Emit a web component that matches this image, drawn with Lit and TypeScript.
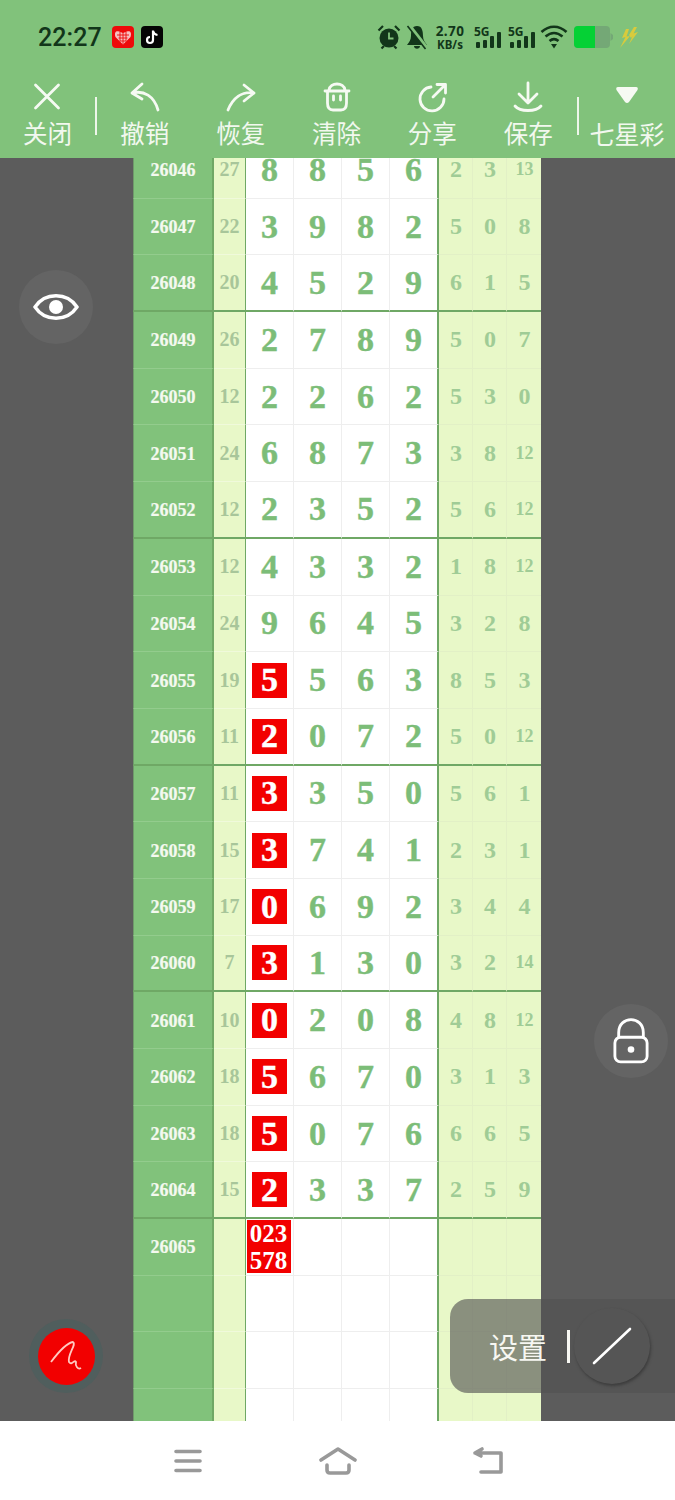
import { LitElement, html, css, svg } from "lit";
import { customElement } from "lit/decorators.js";

type Row = { id: string; sum: string; first: string; rest: string[]; right: string[]; hit?: boolean };

const raw: [string, string, string, string, boolean?][] = [
  ["26046", "27", "8856", "2 3 13"],
  ["26047", "22", "3982", "5 0 8"],
  ["26048", "20", "4529", "6 1 5"],
  ["26049", "26", "2789", "5 0 7"],
  ["26050", "12", "2262", "5 3 0"],
  ["26051", "24", "6873", "3 8 12"],
  ["26052", "12", "2352", "5 6 12"],
  ["26053", "12", "4332", "1 8 12"],
  ["26054", "24", "9645", "3 2 8"],
  ["26055", "19", "5563", "8 5 3", true],
  ["26056", "11", "2072", "5 0 12", true],
  ["26057", "11", "3350", "5 6 1", true],
  ["26058", "15", "3741", "2 3 1", true],
  ["26059", "17", "0692", "3 4 4", true],
  ["26060", "7", "3130", "3 2 14", true],
  ["26061", "10", "0208", "4 8 12", true],
  ["26062", "18", "5670", "3 1 3", true],
  ["26063", "18", "5076", "6 6 5", true],
  ["26064", "15", "2337", "2 5 9", true],
];

const rows: Row[] = raw.map(([id, sum, d, r, hit]) => ({
  id,
  sum,
  first: d[0],
  rest: d.slice(1).split(""),
  right: r.split(" "),
  hit,
}));

const tools: [string, ReturnType<typeof svg>][] = [
  ["关闭", svg`<path d="M5.5 4 L28.5 27 M28.5 4 L5.5 27" />`],
  ["撤销", svg`<path d="M14 3 L4 12 L14 18 M4 12 C16 9 26 15 30 29" />`],
  ["恢复", svg`<path d="M20 4 L30 12 L20 20 M30 12 C18 10 9 17 4 29" />`],
  [
    "清除",
    svg`<path d="M9 9 C10 1 24 1 25 9 M5 10 H29 M7.5 10 V22 C7.5 27 10 29 13 29 H21 C24 29 26.5 27 26.5 22 V10 M13.5 15 V19 M20.5 15 V19" />`,
  ],
  ["分享", svg`<path d="M16 6 A12 12 0 1 0 29 18 M18 16 L30 4 M22 3.5 H30.5 V12" />`],
  ["保存", svg`<path d="M17 2 V21 M8 13 L17 22 L26 13 M4 25 C9 31 25 31 30 25" />`],
];

@customElement("app-root")
export class AppRoot extends LitElement {
  static styles = css`
    :host {
      display: block;
      width: 675px;
      height: 1500px;
      position: relative;
      overflow: hidden;
      background: #fff;
      font-family: "Noto Sans CJK SC", "Noto Sans", sans-serif;
    }
    .head {
      height: 158px;
      background: #81c27b;
      position: relative;
      z-index: 2;
    }
    .status {
      height: 74px;
      display: flex;
      align-items: center;
      padding: 0 37px 0 38px;
      box-sizing: border-box;
      color: #12361a;
    }
    .time {
      font: 500 25px/1 Roboto, sans-serif;
      width: 74px;
      letter-spacing: 0.1px;
    }
    .app {
      width: 22px;
      height: 22px;
      display: block;
      margin-right: 7px;
    }
    .spacer {
      flex: 1;
    }
    .sicons {
      display: flex;
      align-items: center;
      height: 26px;
    }
    .ic {
      display: block;
    }
    .speed {
      width: 28px;
      margin: 0 10px 0 8px;
      text-align: center;
      font-family: "Noto Sans", Roboto, sans-serif;
      font-weight: 700;
      line-height: 1;
      display: flex;
      flex-direction: column;
      align-items: center;
    }
    .speed b {
      font-size: 13.5px;
      line-height: 14px;
      letter-spacing: 0.4px;
      font-weight: 700;
      white-space: nowrap;
    }
    .speed span {
      font-size: 11.5px;
      line-height: 13px;
      white-space: nowrap;
    }
    .sig {
      position: relative;
      width: 27px;
      height: 26px;
      margin-right: 7px;
    }
    .sig.two {
      margin-right: 5px;
    }
    .sig span {
      position: absolute;
      left: 0;
      top: 2px;
      font: 700 12px/1 "Noto Sans", Roboto, sans-serif;
    }
    .sig svg {
      position: absolute;
      left: 0;
      top: 0;
    }
    .tools {
      display: flex;
      height: 84px;
      color: #f2f8ef;
    }
    .tool {
      width: 96px;
      display: flex;
      flex-direction: column;
      align-items: center;
    }
    .tool.first {
      width: 95px;
    }
    .tool svg {
      display: block;
      margin-top: 7px;
      height: 32px;
      width: 34px;
      fill: none;
      stroke: #f6faf3;
      stroke-width: 2.8;
      stroke-linecap: round;
      stroke-linejoin: round;
    }
    .tool svg.solid {
      fill: #f6faf3;
      stroke: none;
    }
    .tool span {
      font-size: 24.5px;
      line-height: 30px;
      margin-top: 5px;
      white-space: nowrap;
    }
    .tool.wide span {
      font-size: 25px;
    }
    .sep {
      width: 2px;
      height: 38px;
      margin-top: 23px;
      background: #eef6ea;
      flex: none;
    }
    .sep.b {
      margin-left: 1px;
    }
    .board {
      height: 1263px;
      background: #5c5c5c;
      overflow: hidden;
      padding-left: 133px;
      box-sizing: border-box;
    }
    .table {
      width: 408px;
      margin-top: -16px;
    }
    .row {
      display: grid;
      grid-template-columns: 81px 32px 48px 48px 48px 49px 34px 34px 34px;
      height: 56.69px;
    }
    .cell {
      box-sizing: border-box;
      display: flex;
      align-items: center;
      justify-content: center;
      font-family: "Liberation Serif", serif;
      font-weight: 700;
      border-bottom: 1px solid #eeeeee;
      min-width: 0;
      overflow: visible;
    }
    .id {
      background: #81c27b;
      color: #f4f9ef;
      font-size: 18px;
      -webkit-text-stroke: 0.2px #f4f9ef;
      border-left: 1px solid #6f9a6a;
      border-right: 2px solid #6fa865;
      border-bottom-color: #93cc8d;
      padding-top: 2px;
    }
    .sum {
      background: #e8f8c8;
      color: #a8c69a;
      font-size: 20px;
      font-weight: 700;
      border-right: 1.5px solid #6fa865;
      border-bottom-color: #f0fadb;
    }
    .num {
      background: #fff;
      color: #7cbd78;
      font-size: 34px;
      -webkit-text-stroke: 0.4px #7cbd78;
      border-right: 1px solid #eeeeee;
    }
    .num.last {
      border-right: 2px solid #6fa865;
    }
    .r {
      background: #e8f8c8;
      color: #a0cc96;
      font-size: 24px;
      padding-left: 1px;
      border-right: 1px solid #e2f0c6;
      border-bottom-color: #e2f0c6;
    }
    .r.small {
      font-size: 18px;
    }
    .r.end {
      border-right: 0;
    }
    .row.end .cell {
      border-bottom: 2px solid #6fa865;
    }
    .hit {
      width: 35px;
      height: 35px;
      background: #f20000;
      color: #fff;
      -webkit-text-stroke: 0.4px #fff;
      display: flex;
      align-items: center;
      justify-content: center;
    }
    .multi {
      width: 44px;
      height: 53px;
      background: #f20000;
      color: #fff;
      -webkit-text-stroke: 0;
      font-size: 25px;
      line-height: 27px;
      text-align: center;
      margin-left: -2px;
      margin-top: -1px;
    }
    .nav {
      height: 79px;
      background: #fff;
      position: relative;
      z-index: 2;
      display: grid;
      grid-template-columns: repeat(3, 150px);
      justify-content: center;
      align-items: center;
      justify-items: center;
    }
    .nav svg {
      display: block;
      fill: none;
      stroke: #999999;
      stroke-width: 3.6;
      stroke-linecap: round;
      stroke-linejoin: round;
    }
    .float {
      position: absolute;
      z-index: 3;
      border-radius: 50%;
      display: flex;
      align-items: center;
      justify-content: center;
      width: 74px;
      height: 74px;
      background: #646464;
    }
    .eye {
      left: 19px;
      top: 270px;
    }
    .lock {
      left: 594px;
      top: 1004px;
    }
    .pen {
      left: 29px;
      top: 1319px;
      background: #505e5d;
    }
    .pen i {
      display: flex;
      width: 57px;
      height: 57px;
      border-radius: 50%;
      background: #f20000;
      align-items: center;
      justify-content: center;
    }
    .pill {
      position: absolute;
      z-index: 3;
      left: 450px;
      top: 1299px;
      width: 225px;
      height: 94px;
      box-sizing: border-box;
      border-radius: 18px 0 0 18px;
      background: rgba(80, 80, 80, 0.62);
      display: flex;
      align-items: center;
      padding-left: 39px;
      color: #f7f7f2;
    }
    .pill span {
      font-size: 29px;
      line-height: 1;
    }
    .pill em {
      display: block;
      width: 3px;
      height: 33px;
      margin-left: 20px;
      background: #f7f7f2;
    }
    .slash {
      width: 76px;
      height: 76px;
      margin-left: 4px;
      border-radius: 50%;
      background: #555555;
      box-shadow: 1px 2px 3px rgba(40, 40, 40, 0.55);
      display: flex;
      align-items: center;
      justify-content: center;
    }
  `;

  private cell(r: Row) {
    return html`<div class="cell num">
      ${r.hit ? html`<div class="hit">${r.first}</div>` : r.first}
    </div>`;
  }

  private dataRow(r: Row, i: number) {
    const end = i % 4 === 2;
    return html`<div class="row ${end ? "end" : ""}">
      <div class="cell id">${r.id}</div>
      <div class="cell sum">${r.sum}</div>
      ${this.cell(r)}
      ${r.rest.map(
        (d, k) => html`<div class="cell num ${k === 2 ? "last" : ""}">${d}</div>`
      )}
      ${r.right.map(
        (d, k) =>
          html`<div class="cell r ${d.length > 1 ? "small" : ""} ${k === 2 ? "end" : ""}">${d}</div>`
      )}
    </div>`;
  }

  private blankRow(content: unknown, id: string) {
    return html`<div class="row">
      <div class="cell id">${id}</div>
      <div class="cell sum"></div>
      <div class="cell num">${content}</div>
      <div class="cell num"></div>
      <div class="cell num"></div>
      <div class="cell num last"></div>
      <div class="cell r"></div>
      <div class="cell r"></div>
      <div class="cell r end"></div>
    </div>`;
  }

  private sig() {
    return svg`<svg width="27" height="26" viewBox="0 0 27 26" fill="#12361a">
      <rect x="2" y="18" width="4" height="6" rx="1"/><rect x="9" y="16" width="4" height="8" rx="1"/>
      <rect x="16" y="12" width="4" height="12" rx="1"/><rect x="23" y="8" width="4" height="16" rx="1"/></svg>`;
  }

  render() {
    return html`
      <div class="head">
        <div class="status">
          <div class="time">22:27</div>
          <svg class="app" viewBox="0 0 22 22">
            <rect width="22" height="22" rx="4" fill="#ee0a0a" />
            <path
              d="M11 18.5 L3.5 11 C2 6.5 4 4.5 7 5.5 L11 7 L15 5.5 C18 4.5 20 6.5 18.5 11 Z"
              fill="#f6c0c0"
            />
            <path
              d="M5 9 H17 M6.5 12 H15.5 M8 15 H14 M8 6 V15 M11 6 V18 M14 6 V15"
              stroke="#ee0a0a"
              stroke-width="0.9"
            />
          </svg>
          <svg class="app" viewBox="0 0 22 22">
            <rect width="22" height="22" rx="4" fill="#050505" />
            <path
              d="M12 4.5 V14 A3 3 0 1 1 9 11 M12 5 C12.6 7.5 14.2 8.7 16.5 9"
              fill="none"
              stroke="#fff"
              stroke-width="2.2"
            />
          </svg>
          <div class="spacer"></div>
          <div class="sicons">
            <svg class="ic" width="24" height="26" viewBox="0 0 24 26" style="margin-right:5px">
              <circle cx="12" cy="14" r="9.5" fill="#12361a" />
              <path d="M12 8.5 V14.5 H16.5" stroke="#81c27b" stroke-width="1.8" fill="none" />
              <path
                d="M1.5 6.5 L6 2 M22.5 6.5 L18 2 M4.5 24.5 L7 22 M19.5 24.5 L17 22"
                stroke="#12361a"
                stroke-width="2.2"
              />
            </svg>
            <svg class="ic" width="22" height="26" viewBox="0 0 22 26">
              <path
                d="M11 2 C6 2 5 7 5 12 C5 16 3 18 1 21 H21 C19 18 17 16 17 12 C17 7 16 2 11 2 Z M8 22 H14 C14 25.5 8 25.5 8 22 Z"
                fill="#12361a"
              />
              <path d="M3 1 L21 24" stroke="#81c27b" stroke-width="3.5" />
              <path d="M1.5 2 L19.5 25" stroke="#12361a" stroke-width="1.6" />
            </svg>
            <div class="speed"><b>2.70</b><span>KB/s</span></div>
            <div class="sig"><span>5G</span>${this.sig()}</div>
            <div class="sig two"><span>5G</span>${this.sig()}</div>
            <svg class="ic" width="28" height="26" viewBox="0 0 28 26" style="margin-right:6px">
              <path
                d="M1.5 8 C9 1 19 1 26.5 8 M5.5 12.5 C11 8 17 8 22.5 12.5 M9.5 17 C12.5 14.5 15.5 14.5 18.5 17"
                fill="none"
                stroke="#12361a"
                stroke-width="2.6"
              />
              <path d="M11 20 H17 L14 24.5 Z" fill="#12361a" />
            </svg>
            <svg class="ic" width="39" height="22" viewBox="0 0 39 22" style="margin-right:5px">
              <rect width="36" height="22" rx="4" fill="#74a876" />
              <path d="M4 0 H21 V22 H4 A4 4 0 0 1 0 18 V4 A4 4 0 0 1 4 0 Z" fill="#05d135" />
              <path d="M36.5 7 L39 9 V13 L36.5 15 Z" fill="#74a876" />
            </svg>
            <svg class="ic" width="20" height="22" viewBox="0 0 20 22">
              <path
                d="M8 3 L4 12 L7.5 11 L2 22 L12 10 L8.5 10.5 L11 3 Z M16 1 L11 9 L13 12 L14.5 10 L11 18 L20 6 L15.5 7.5 L19 1 Z"
                fill="#d8cb3c"
              />
            </svg>
          </div>
        </div>
        <div class="tools">
          <div class="tool first">
            <svg viewBox="0 0 34 32">${tools[0][1]}</svg><span>${tools[0][0]}</span>
          </div>
          <div class="sep"></div>
          ${tools.slice(1).map(
            ([t, p]) => html`<div class="tool"><svg viewBox="0 0 34 32">${p}</svg><span>${t}</span></div>`
          )}
          <div class="sep b"></div>
          <div class="tool wide">
            <svg class="solid" viewBox="0 0 34 32"><path d="M8 6 H26 Q28.5 6 27.5 9 L19 21 Q17 23 15 21 L6.5 9 Q5.5 6 8 6 Z" /></svg>
            <span>七星彩</span>
          </div>
        </div>
      </div>
      <div class="board">
        <div class="table">
          ${rows.map((r, i) => this.dataRow(r, i))}
          ${this.blankRow(html`<div class="multi">023<br />578</div>`, "26065")}
          ${this.blankRow("", "")} ${this.blankRow("", "")} ${this.blankRow("", "")}
        </div>
      </div>
      <div class="nav">
        <svg width="34" height="28" viewBox="0 0 34 28"><path d="M5 4.5 H29 M5 14 H29 M5 23.5 H29" /></svg>
        <svg width="38" height="30" viewBox="0 0 38 30">
          <path d="M2 14 L19 3 L36 14 M8 19 V24 Q8 27 11 27 H27 Q30 27 30 24 V19" />
        </svg>
        <svg width="34" height="30" viewBox="0 0 34 30">
          <path d="M11 3 L4 7 L10 10 M4 7 H30 V26 H10" />
        </svg>
      </div>

      <div class="float eye">
        <svg width="46" height="34" viewBox="0 0 46 34">
          <path
            d="M2 17 C12 2 34 2 44 17 C34 32 12 32 2 17 Z"
            fill="none"
            stroke="#fff"
            stroke-width="3.4"
          />
          <circle cx="23" cy="17" r="7" fill="#fff" />
        </svg>
      </div>
      <div class="float lock">
        <svg width="36" height="46" viewBox="0 0 38 48" fill="none" stroke="#fff" stroke-width="3">
          <path d="M6 20 V15 C6 -3 32 -3 32 15 V20" />
          <rect x="2" y="20" width="34" height="26" rx="6" />
          <circle cx="19" cy="33" r="3.5" fill="#fff" stroke="none" />
        </svg>
      </div>
      <div class="float pen">
        <i>
          <svg width="36" height="38" viewBox="0 0 36 38" fill="none" stroke="#ffc9c0" stroke-width="1.8">
            <path d="M3 25 C9 17 18 6 25 5 C29 7 19 18 21 25 C24 29 26 22 28 25 C27 29 30 33 33 31" />
          </svg>
        </i>
      </div>
      <div class="pill">
        <span>设置</span><em></em>
        <div class="slash">
          <svg width="40" height="38" viewBox="0 0 40 38">
            <path d="M2 36 L38 2" stroke="#fff" stroke-width="2.6" stroke-linecap="round" />
          </svg>
        </div>
      </div>
    `;
  }
}
